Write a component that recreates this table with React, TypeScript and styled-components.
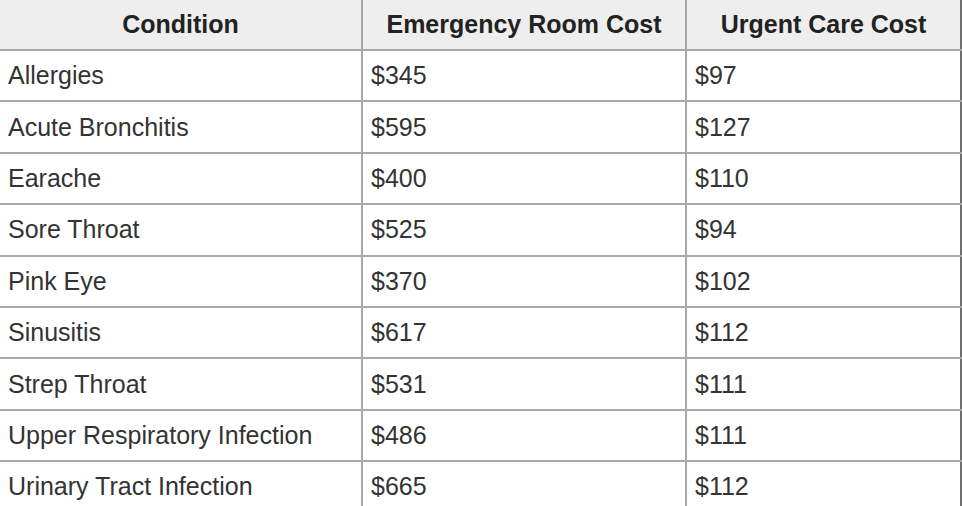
import React from "react";
import styled, { createGlobalStyle } from "styled-components";

const GlobalStyle = createGlobalStyle`
  html, body { margin: 0; padding: 0; background: #ffffff; }
`;

const Table = styled.table`
  border-collapse: collapse;
  table-layout: fixed;
  width: 961px;
  font-family: "Liberation Sans", Arial, sans-serif;
  font-size: 25px;
  line-height: 1.15;
`;

const HeadCell = styled.th<{ $last?: boolean }>`
  height: 49px;
  padding: 0 8px;
  background: #eeeeee;
  color: #222222;
  font-weight: 700;
  text-align: center;
  vertical-align: middle;
  white-space: nowrap;
  border-bottom: 2px solid #a8a8a8;
  border-right: 2px solid ${(p) => (p.$last ? "#6e6e6e" : "#a8a8a8")};
`;

const Cell = styled.td<{ $last?: boolean }>`
  height: 49.4px;
  padding: 0 8px;
  color: #333333;
  text-align: left;
  vertical-align: middle;
  white-space: nowrap;
  border-bottom: 2px solid #a8a8a8;
  border-right: 2px solid ${(p) => (p.$last ? "#6e6e6e" : "#a8a8a8")};
`;

const rows: [string, string, string][] = [
  ["Allergies", "$345", "$97"],
  ["Acute Bronchitis", "$595", "$127"],
  ["Earache", "$400", "$110"],
  ["Sore Throat", "$525", "$94"],
  ["Pink Eye", "$370", "$102"],
  ["Sinusitis", "$617", "$112"],
  ["Strep Throat", "$531", "$111"],
  ["Upper Respiratory Infection", "$486", "$111"],
  ["Urinary Tract Infection", "$665", "$112"],
];

export default function App() {
  return (
    <>
      <GlobalStyle />
      <Table>
        <colgroup>
          <col style={{ width: 362 }} />
          <col style={{ width: 324 }} />
          <col style={{ width: 275 }} />
        </colgroup>
        <thead>
          <tr>
            <HeadCell>Condition</HeadCell>
            <HeadCell>Emergency Room Cost</HeadCell>
            <HeadCell $last>Urgent Care Cost</HeadCell>
          </tr>
        </thead>
        <tbody>
          {rows.map(([c, er, uc]) => (
            <tr key={c}>
              <Cell>{c}</Cell>
              <Cell>{er}</Cell>
              <Cell $last>{uc}</Cell>
            </tr>
          ))}
        </tbody>
      </Table>
    </>
  );
}
